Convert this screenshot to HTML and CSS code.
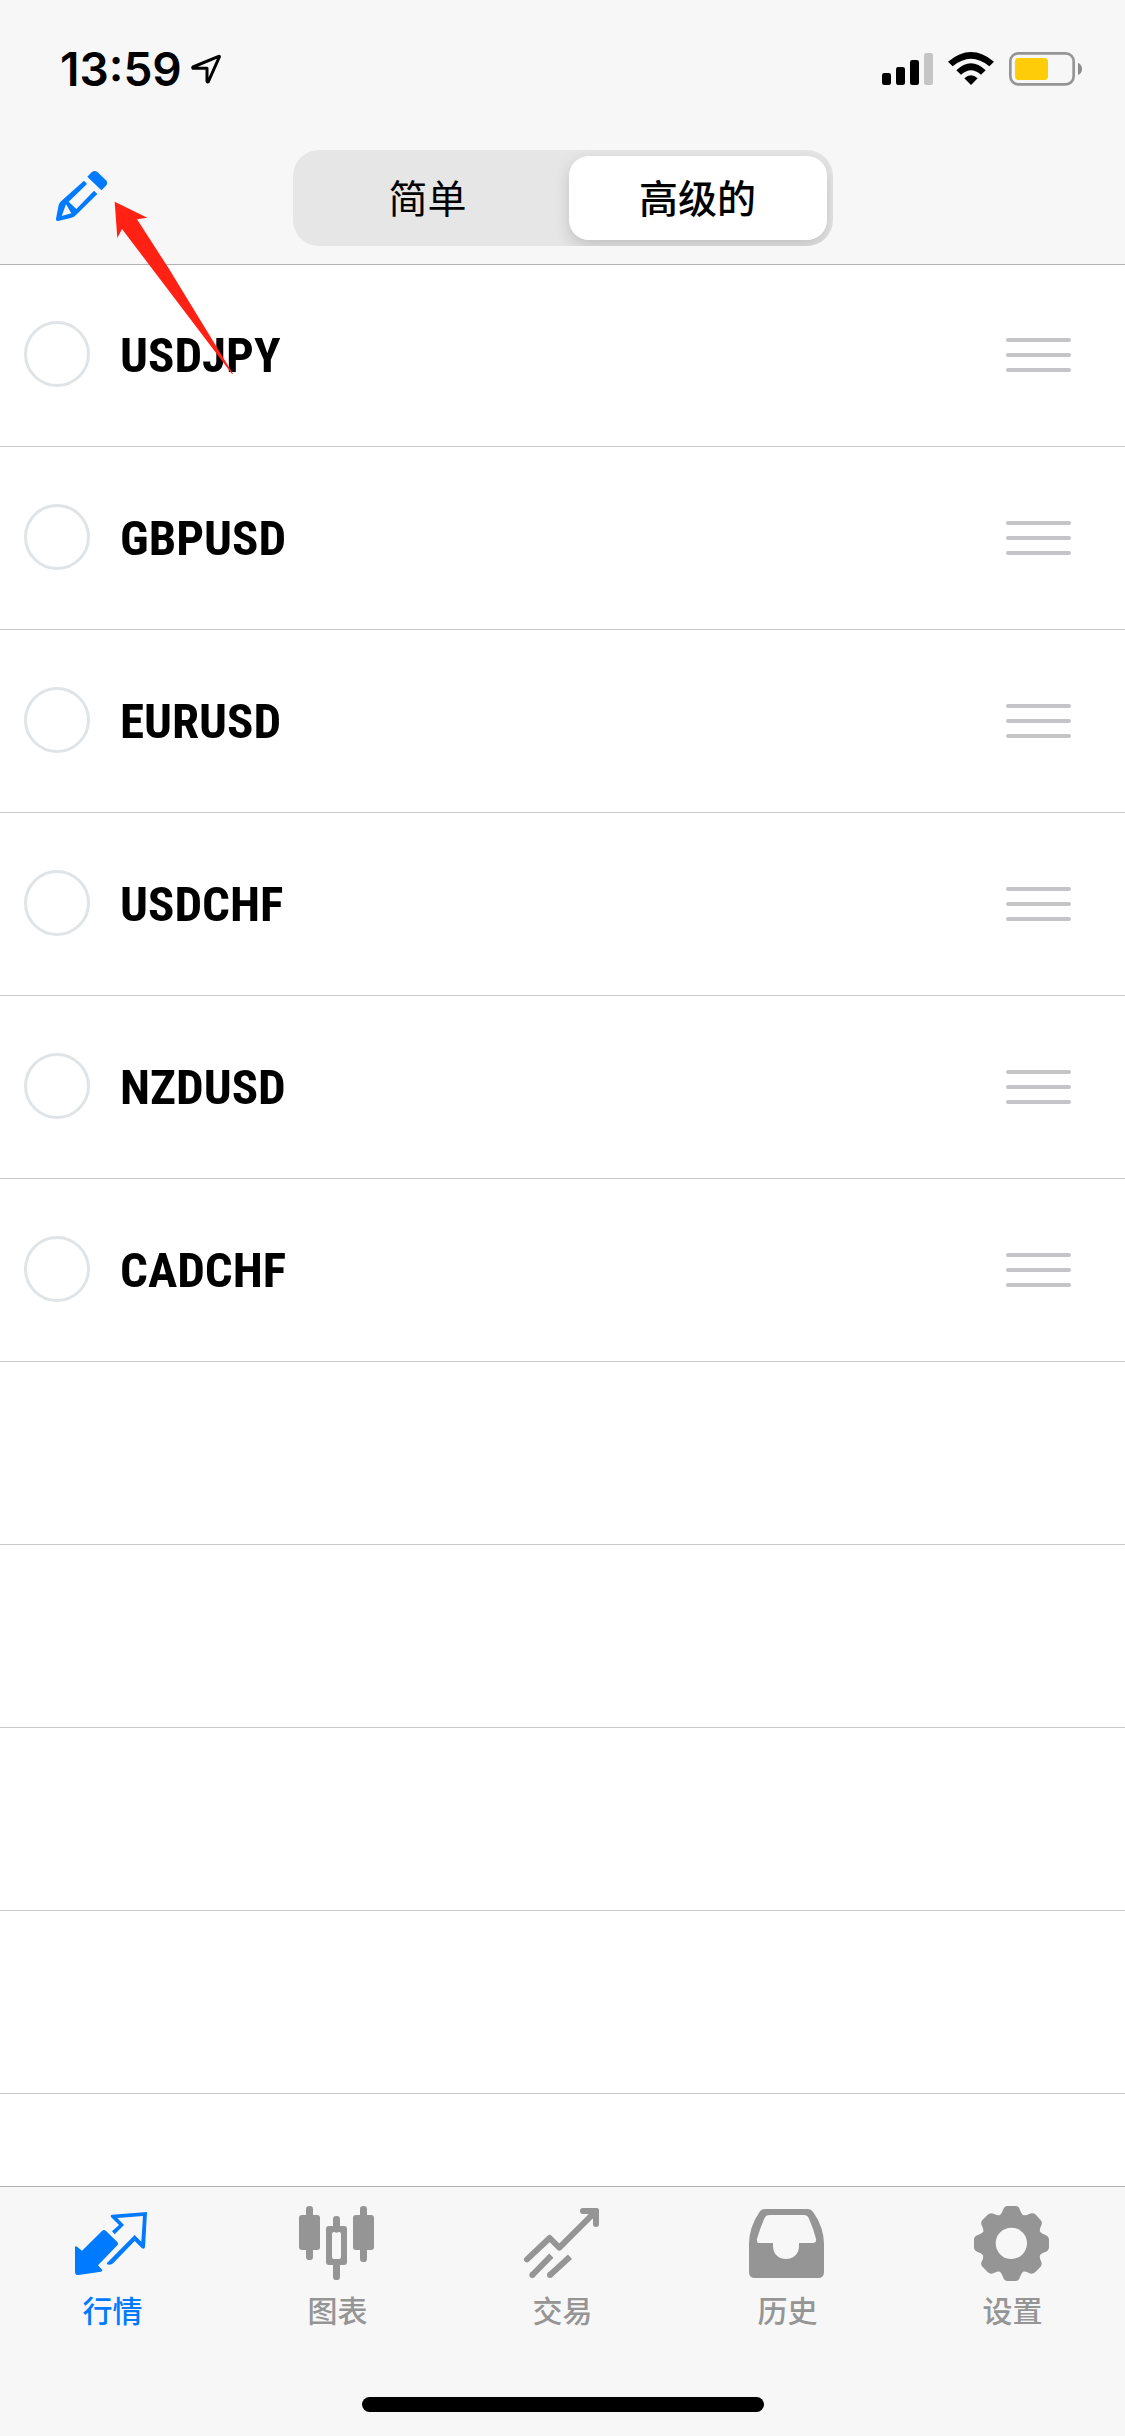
FILE: index.html
```html
<!DOCTYPE html>
<html lang="zh-CN">
<head>
<meta charset="utf-8">
<meta name="viewport" content="width=device-width, initial-scale=1">
<title>行情</title>
<link rel="stylesheet" href="styles.css">
</head>
<body>
<div class="app">
  <header class="header">
    <div class="status">
      <div class="status-left">
        <time class="clock">13:59</time>
        <svg class="location" viewBox="0 0 90 90" aria-hidden="true"><path d="M6 39 83 7Q86 6 85 9L52 83Q49 86 48 81V43H9Q3 43 6 39Z"/></svg>
      </div>
      <svg class="indicators" viewBox="66 63 600 108" aria-hidden="true">
        <rect x="66" y="129" width="27" height="36" rx="7"/>
        <rect x="108" y="111" width="27" height="54" rx="7"/>
        <rect x="150" y="90" width="27" height="75" rx="7"/>
        <rect x="192" y="69" width="27" height="96" rx="7" fill="#c5c5c5"/>
        <path d="M264 95Q333 37 402 95L388 109Q333 64 278 109Z"/>
        <path d="M289 121Q333 79 377 121L363 134Q333 107 303 134Z"/>
        <path d="M313 145Q333 127 353 145L333 165Z"/>
        <rect x="451" y="70" width="190" height="93" rx="24" fill="none" stroke="#959595" stroke-width="8"/>
        <rect x="465" y="84" width="99" height="66" rx="11" fill="#ffcc0a"/>
        <path d="M654 98Q666 104 666 117T654 135Z" fill="#8c8c8c"/>
      </svg>
    </div>
    <div class="toolbar">
      <button class="edit" type="button" aria-label="编辑">
        <svg viewBox="168 510 156 156" aria-hidden="true">
          <path fill="#007aff" d="M262 530 275 517Q284 509 293 517L318 541Q325 549 318 557L304 571Z"/>
          <path fill="#007aff" fill-rule="evenodd" d="M252 542 261 552 206 605 229 627 282 572 292 582 228 645Q222 652 212 654L174 663Q167 664 168 656L176 615Q178 608 184 603ZM198 613 185 648 214 640Z"/>
        </svg>
      </button>
      <div class="segmented" role="radiogroup" aria-label="显示模式">
        <label class="segment"><input type="radio" name="mode"><span>简单</span></label>
        <label class="segment"><input type="radio" name="mode" checked><span>高级的</span></label>
      </div>
    </div>
    <svg class="pointer" viewBox="342 603 360 522" aria-hidden="true"><path d="M344 605 442 653 411 658 504 802 699 1121 696 1122 366 687 352 714Z"/></svg>
  </header>

  <main class="content">
    <ul class="symbols">
      <li class="symbol"><label><input type="checkbox"><span>USDJPY</span></label><button class="handle" type="button" aria-label="移动 USDJPY"><i></i><i></i><i></i></button></li>
      <li class="symbol"><label><input type="checkbox"><span>GBPUSD</span></label><button class="handle" type="button" aria-label="移动 GBPUSD"><i></i><i></i><i></i></button></li>
      <li class="symbol"><label><input type="checkbox"><span>EURUSD</span></label><button class="handle" type="button" aria-label="移动 EURUSD"><i></i><i></i><i></i></button></li>
      <li class="symbol"><label><input type="checkbox"><span>USDCHF</span></label><button class="handle" type="button" aria-label="移动 USDCHF"><i></i><i></i><i></i></button></li>
      <li class="symbol"><label><input type="checkbox"><span>NZDUSD</span></label><button class="handle" type="button" aria-label="移动 NZDUSD"><i></i><i></i><i></i></button></li>
      <li class="symbol"><label><input type="checkbox"><span>CADCHF</span></label><button class="handle" type="button" aria-label="移动 CADCHF"><i></i><i></i><i></i></button></li>
    </ul>
    <div class="empty-rows"></div>
  </main>

  <footer class="footer">
    <nav class="tabs">
      <a class="tab active" href="#quotes" aria-current="page">
        <svg viewBox="225 108 225 225" aria-hidden="true">
          <path d="M306 183Q312 177 318 183L352 216Q357 221 352 226L294 286 305 298Q309 303 303 305L236 315Q225 316 225 305V232Q226 226 231 230L246 242Z"/>
          <path d="M336 184 357 165 333 141Q330 135 337 134L441 126 435 231Q433 239 426 235L404 213 340 279Q336 284 328 284 318 284 321 279L404 195 424 215 429 138 352 144 372 165 344 193Z"/>
        </svg>
        <span>行情</span>
      </a>
      <a class="tab" href="#charts">
        <svg viewBox="900 108 225 225" aria-hidden="true">
          <rect x="918" y="108" width="21" height="162" rx="10"/><rect x="897" y="135" width="63" height="105" rx="9"/>
          <rect x="1080" y="108" width="21" height="168" rx="10"/><rect x="1059" y="135" width="63" height="105" rx="9"/>
          <rect x="999" y="138" width="21" height="50" rx="10"/><rect x="999" y="270" width="21" height="60" rx="10"/>
          <path fill-rule="evenodd" d="M987 168H1032Q1041 168 1041 177V276Q1041 285 1032 285H987Q978 285 978 276V177Q978 168 987 168ZM1004 185Q996 185 996 193V260Q996 267 1004 267H1015Q1023 267 1023 260V193Q1023 185 1015 185Z"/>
        </svg>
        <span>图表</span>
      </a>
      <a class="tab" href="#trade">
        <svg viewBox="135 108 225 225" aria-hidden="true">
          <g fill="none" stroke="currentColor" stroke-width="18" stroke-linejoin="round">
            <path stroke-linecap="round" d="M141 268 209 204 238 233 347 124M309 123H348V162"/>
            <path d="M214 257 157 315M270 260 210 315"/>
          </g>
          <circle cx="157" cy="315" r="9"/><circle cx="210" cy="315" r="9"/>
          <path d="M330 114H348Q357 114 357 123V140H346V126H330Z"/>
        </svg>
        <span>交易</span>
      </a>
      <a class="tab" href="#history">
        <svg viewBox="810 108 225 225" aria-hidden="true">
          <path fill-rule="evenodd" d="M856 117H984Q993 117 999 125Q1032 172 1032 222V306Q1032 324 1014 324H825Q807 324 807 306V222Q807 172 839 125Q845 117 856 117ZM868 135Q858 135 854 144Q839 176 831 207Q829 219 840 219H879V228C879 280 957 280 957 228V219H998Q1010 219 1008 207Q1001 177 986 144Q982 135 972 135Z"/>
        </svg>
        <span>历史</span>
      </a>
      <a class="tab" href="#settings">
        <svg viewBox="375 108 225 225" aria-hidden="true">
          <path fill-rule="evenodd" d="M472 108H497Q506 108 510 120 513 129 519 135Q528 137 536 133 548 126 556 133L571 149Q579 157 573 168 568 178 570 185 575 191 585 194 597 199 597 209V231Q597 242 586 246 575 249 570 256 568 264 573 273 578 284 571 291L556 306Q548 314 537 309 527 304 519 305 513 311 510 321 506 333 497 333H472Q463 333 459 321 456 311 450 305 442 304 432 309 421 315 413 306L398 291Q390 283 396 273 401 264 399 256 394 249 383 246 372 242 372 231V209Q372 199 384 195 395 191 400 185 401 177 396 168 390 157 398 149L413 134Q421 126 433 132 442 137 450 135 456 129 459 120 463 108 472 108ZM484 173A47 47 0 1 0 484 267A47 47 0 1 0 484 173Z"/>
        </svg>
        <span>设置</span>
      </a>
    </nav>
    <div class="home-indicator"></div>
  </footer>
</div>
</body>
</html>
```

FILE: styles.css
```css
* {
  box-sizing: border-box;
}

body {
  margin: 0;
  background: #fff;
  color: #000;
  font-family: Inter, "Noto Sans CJK SC", sans-serif;
}

button {
  padding: 0;
  border: 0;
  background: none;
}

svg {
  display: block;
  overflow: visible;
}

.app {
  display: flex;
  flex-direction: column;
  height: 100vh;
}

/* Header */
.header {
  position: relative;
  flex: none;
  background: #f7f7f7;
  border-bottom: 1px solid #b2b2b2;
}

.status {
  display: flex;
  align-items: center;
  justify-content: space-between;
  height: 138px;
  padding: 0 43px 0 60px;
}

.status-left {
  display: flex;
  align-items: center;
  gap: 9px;
}

.clock {
  font-size: 46px;
  font-weight: 600;
  line-height: 54px;
}

.location {
  width: 30px;
  height: 30px;
  fill: none;
  stroke: #000;
  stroke-width: 9;
  stroke-linejoin: round;
}

.indicators {
  width: 200px;
  height: 36px;
}

.toolbar {
  display: grid;
  grid-template-columns: 1fr 48% 1fr;
  align-items: center;
  padding: 12px 0 18px;
}

.edit {
  justify-self: start;
  margin: 0 0 4px 56px;
}

.edit svg {
  width: 52px;
  height: 52px;
}

.segmented {
  display: grid;
  grid-template-columns: 1fr 1fr;
  gap: 12px;
  height: 96px;
  padding: 6px;
  border-radius: 26px;
  background: #e6e6e6;
  overflow: hidden;
}

.segment {
  display: flex;
}

.segment input {
  position: absolute;
  opacity: 0;
}

.segment span {
  flex: 1;
  height: 84px;
  border-radius: 20px;
  font-size: 39px;
  line-height: 86px;
  text-align: center;
}

.segment input:checked + span {
  background: #fff;
  font-weight: 500;
  box-shadow: 0 6px 16px rgba(0, 0, 0, 0.16);
}

.pointer {
  position: absolute;
  z-index: 1;
  top: 201px;
  left: 114px;
  width: 120px;
  height: 174px;
  fill: #ff2113;
  pointer-events: none;
}

/* Symbol list */
.content {
  display: flex;
  flex: 1;
  flex-direction: column;
  min-height: 0;
  margin-top: -1px;
}

.symbols {
  margin: 0;
  padding: 0;
  list-style: none;
}

.symbol {
  display: flex;
  align-items: center;
  justify-content: space-between;
  height: 183px;
  padding: 0 54px 0 24px;
  border-bottom: 1px solid #c8c8c8;
}

.symbol label {
  display: flex;
  align-items: center;
  gap: 30px;
  padding-bottom: 2px;
  font-family: "Liberation Sans Narrow", "Roboto Condensed", "Liberation Sans", sans-serif;
  font-size: 49px;
  font-weight: 700;
  line-height: 60px;
}

.symbol label span {
  padding-top: 4px;
}

.symbol input {
  appearance: none;
  width: 66px;
  height: 66px;
  margin: 0;
  border: 3px solid #e0e4e7;
  border-radius: 50%;
}

.handle {
  display: grid;
  gap: 11px;
  width: 65px;
}

.handle i {
  height: 4px;
  border-radius: 2px;
  background: #c5c5c7;
}

.empty-rows {
  flex: 1;
  background: repeating-linear-gradient(transparent 0 182px, #c8c8c8 182px 183px);
}

/* Tab bar */
.footer {
  flex: none;
  padding: 19px 0 24px;
  border-top: 1px solid #b2b2b2;
  background: #f7f7f7;
}

.tabs {
  display: grid;
  grid-template-columns: repeat(5, 1fr);
}

.tab {
  display: flex;
  flex-direction: column;
  align-items: center;
  gap: 10px;
  color: #959595;
  font-size: 30px;
  font-weight: 500;
  line-height: 40px;
  text-decoration: none;
}

.tab.active {
  color: #007aff;
}

.tab svg {
  width: 75px;
  height: 75px;
  fill: currentColor;
}

.home-indicator {
  width: 402px;
  height: 15px;
  margin: 66px auto 0;
  border-radius: 8px;
  background: #000;
}
```
